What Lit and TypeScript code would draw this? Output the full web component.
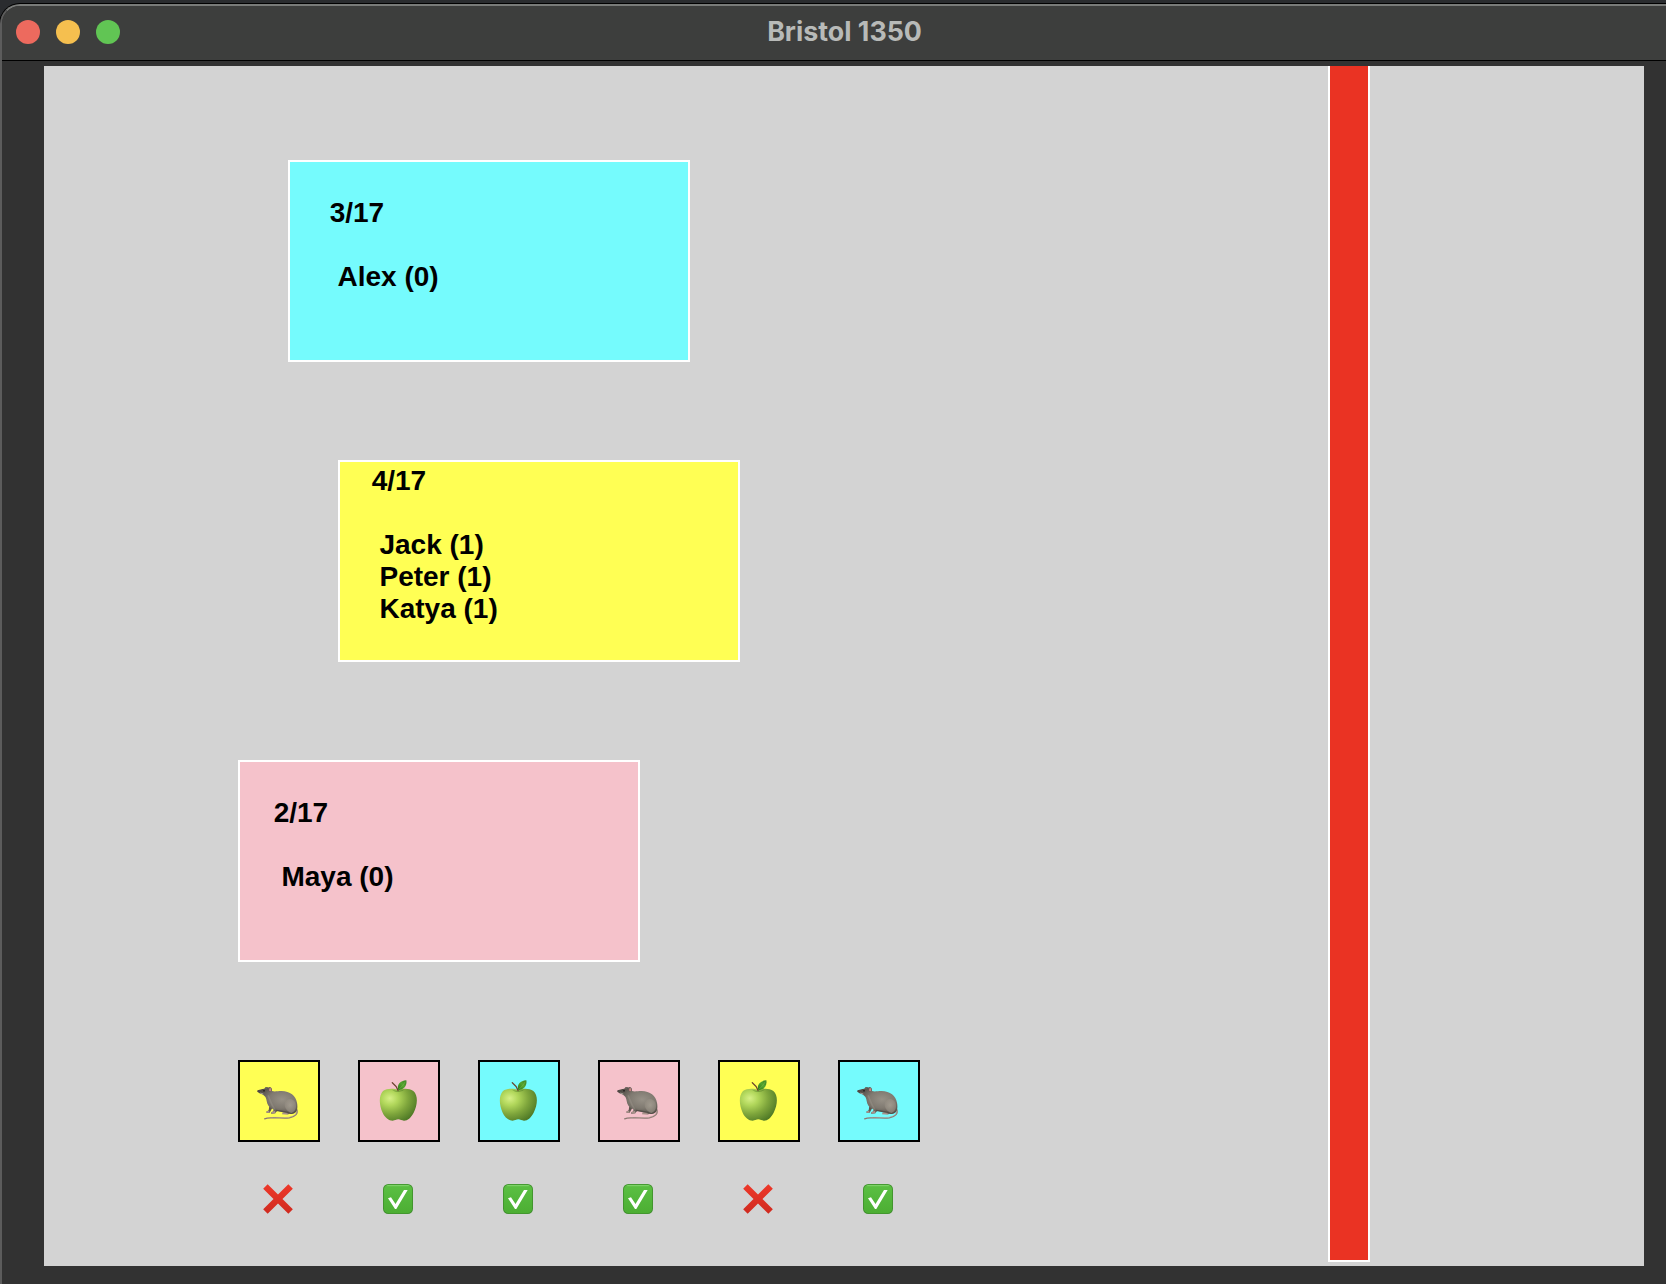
import { LitElement, html, svg, css } from "lit";
import { customElement } from "lit/decorators.js";
import { classMap } from "lit/directives/class-map.js";

type Tone = "cyan" | "yellow" | "pink";

interface Cart {
  tone: Tone;
  score: string;
  players: string[];
}

interface Die {
  tone: Tone;
  face: "rat" | "apple";
  kept: boolean;
}

const CARTS: Cart[] = [
  { tone: "cyan", score: "3/17", players: ["Alex (0)"] },
  { tone: "yellow", score: "4/17", players: ["Jack (1)", "Peter (1)", "Katya (1)"] },
  { tone: "pink", score: "2/17", players: ["Maya (0)"] },
];

const DICE: Die[] = [
  { tone: "yellow", face: "rat", kept: false },
  { tone: "pink", face: "apple", kept: true },
  { tone: "cyan", face: "apple", kept: true },
  { tone: "pink", face: "rat", kept: true },
  { tone: "yellow", face: "apple", kept: false },
  { tone: "cyan", face: "rat", kept: true },
];

const rat = svg`
  <defs>
    <radialGradient id="fur" cx="0.62" cy="0.45" r="0.6">
      <stop offset="0" stop-color="#979187"/>
      <stop offset="0.55" stop-color="#7f7970"/>
      <stop offset="1" stop-color="#514c46"/>
    </radialGradient>
    <radialGradient id="thigh" cx="0.5" cy="0.45" r="0.6">
      <stop offset="0" stop-color="#aaa397"/>
      <stop offset="1" stop-color="#8c857b"/>
    </radialGradient>
  </defs>
  <path d="M200 178 C205 190 197 200 178 203.500 C158 206 142 202 122 203.500 C113 204 108 205 104 206.500" fill="none" stroke="#8d7a74" stroke-width="4" stroke-linecap="round"/>
  <path d="M200 182 C202 191 195 198 178 201.500 C158 204 142 201 124 202.500" fill="none" stroke="#b8a19a" stroke-width="1.400"/>
  <path d="M118 168 L116 181 L109 185 L110 188 L119 188 L128 172Z" fill="#5d554e"/>
  <path d="M82 122 C88 118 95 117 103 116 C106 112 112 111 115 113 C120 110 127 114 126 123 C134 126 142 123 155 123 C180 123 198 138 201 158 C204 173 202 187 190 191 C178 194 170 190 158 187 L143 183 C139 185 137 186 136 190 L124 191 L123 188 L130 184 L130 178 C118 173 111 164 110 153 C109 144 106 138 99 134 C92 132 87 129 83 126Z" fill="url(#fur)"/>
  <path d="M165 156 C171 142 192 144 197 160 C200 174 196 185 184 189 C171 185 160 170 165 156Z" fill="url(#thigh)" opacity="0.75"/>
  <path d="M114 136 C121 149 123 164 134 178" fill="none" stroke="#aaa398" stroke-width="5" opacity="0.3"/>
  <ellipse cx="108" cy="115" rx="3.500" ry="3" fill="#69605b"/>
  <ellipse cx="119.500" cy="118.500" rx="5.500" ry="6.500" fill="#665b57"/>
  <ellipse cx="120.500" cy="119" rx="3.300" ry="5" fill="#c58583"/>
  <circle cx="102" cy="122.500" r="2.500" fill="#171414"/>
  <path d="M82 122 L88 119.500 L87 125 L83 126Z" fill="#4f4443"/>
  <path d="M91 129 L100 132" stroke="#cbc4bb" stroke-width="2"/>
  <path d="M110 184 L118 182 L118 188 L109 188Z M125 186 L135 182 L136 190 L124 191Z M157 189 Q168 184 176 191 L175 194 L156 193Z" fill="#a8918a"/>
  <path d="M138 181 C154 184 166 184 178 190" fill="none" stroke="#48423e" stroke-width="4" opacity="0.6"/>
`;

const apple = svg`
  <defs>
    <radialGradient id="skin" cx="0.27" cy="0.3" r="0.8">
      <stop offset="0" stop-color="#d6f087"/>
      <stop offset="0.28" stop-color="#b0d65a"/>
      <stop offset="0.62" stop-color="#7fa63c"/>
      <stop offset="1" stop-color="#4f7926"/>
    </radialGradient>
    <linearGradient id="leaf" x1="0" y1="1" x2="1" y2="0">
      <stop offset="0" stop-color="#2d761a"/>
      <stop offset="0.55" stop-color="#55a42e"/>
      <stop offset="1" stop-color="#397f24"/>
    </linearGradient>
  </defs>
  <path d="M145 120 C158 115 178 114 190 123 C205 136 203 165 191 188 C183 203 173 212 162 212 C155 212 151 208 145 208 C139 208 134 212 128 212 C117 212 104 202 98 188 C87 164 86 137 99 123 C111 114 133 115 145 120Z" fill="url(#skin)"/>
  <path d="M126 119 Q145 126 165 118 Q157 126 145 126 Q134 126 126 119Z" fill="#5b872c" opacity="0.65"/>
  <path d="M144 121 C140 110 135 104 127 98" fill="none" stroke="#69412d" stroke-width="4" stroke-linecap="round"/>
  <path d="M145 121 C139 104 151 92 169 91 C172 108 161 119 145 121Z" fill="url(#leaf)"/>
  <path d="M147 118 Q158 109 166 95" fill="none" stroke="#80bd51" stroke-width="1.500"/>
`;

const cross = svg`
  <defs>
    <linearGradient id="ink" x1="0" y1="0" x2="0" y2="1">
      <stop offset="0" stop-color="#ee3829"/>
      <stop offset="1" stop-color="#cf2a1f"/>
    </linearGradient>
  </defs>
  <path d="M14 0.500 L45 31.500 L76 0.500 L89.500 14 L58.500 45 L89.500 76 L76 89.500 L45 58.500 L14 89.500 L0.500 76 L31.500 45 L0.500 14Z" fill="url(#ink)"/>
`;

const check = svg`
  <defs>
    <linearGradient id="box" x1="0" y1="0" x2="0" y2="1">
      <stop offset="0" stop-color="#5bc043"/>
      <stop offset="1" stop-color="#4cae33"/>
    </linearGradient>
  </defs>
  <rect x="0" y="0" width="90" height="90" rx="16" fill="#3f8f2c"/>
  <rect x="2.500" y="2.500" width="85" height="85" rx="14" fill="url(#box)"/>
  <path d="M14 5 H76" stroke="#8bd977" stroke-width="2.500" stroke-linecap="round"/>
  <path d="M15 42.500 L24 40 L37.500 60 L63 18 L74 18 L40 75 L36 75Z" fill="#fff"/>
`;

@customElement("title-bar")
export class TitleBar extends LitElement {
  static styles = css`
    :host {
      display: block;
    }
    .bar {
      box-sizing: border-box;
      height: 55px;
      display: grid;
      grid-template-columns: 1fr auto 1fr;
      align-items: center;
      padding-left: 14px;
      padding-bottom: 2px;
      background: #3d3e3d;
      border-bottom: 1px solid #000;
    }
    .lights {
      display: flex;
      gap: 16px;
    }
    .light {
      width: 24px;
      height: 24px;
      border-radius: 50%;
    }
    .close { background: #ed6a5e; }
    .minimize { background: #f5bf4f; }
    .zoom { background: #61c554; }
    .title {
      font: 700 26.800px/32px Inter, sans-serif;
      color: #b8bab8;
      white-space: nowrap;
      padding: 0 0 3px 7px;
    }
  `;

  render() {
    return html`
      <div class="bar">
        <div class="lights">
          <div class="light close"></div>
          <div class="light minimize"></div>
          <div class="light zoom"></div>
        </div>
        <div class="title">Bristol 1350</div>
      </div>
    `;
  }
}

@customElement("app-root")
export class AppRoot extends LitElement {
  static styles = css`
    :host {
      display: block;
      height: 1284px;
      overflow: hidden;
      background: #2a2c2f;
    }
    .window {
      box-sizing: border-box;
      height: 1280px;
      border-top: 2px solid #797b79;
      border-left: 2px solid #5c5c5c;
      border-top-left-radius: 20px;
      box-shadow: 0 0 0 1px #000;
      background: #323232;
      overflow: hidden;
    }
    .desktop {
      padding-top: 4px;
    }
    .board {
      box-sizing: border-box;
      width: 1600px;
      height: 1200px;
      margin: 5px 0 0 42px;
      padding-left: 194px;
      background: #d3d3d3;
      display: flex;
      justify-content: space-between;
    }
    .play {
      padding-top: 94px;
    }
    .carts {
      display: flex;
      flex-direction: column;
      align-items: flex-start;
      gap: 98px;
    }
    .cart {
      box-sizing: border-box;
      width: 402px;
      height: 202px;
      border: 2px solid #fff;
      font: 700 28px/32px "Liberation Sans", Arial, sans-serif;
      color: #000;
    }
    .cyan { background: #75fbfd; }
    .yellow { background: #ffff54; }
    .pink { background: #f5c2cb; }
    .cart.cyan { margin-left: 50px; padding: 35px 0 0 39.700px; }
    .cart.yellow { margin-left: 100px; padding: 3px 0 0 31.700px; }
    .cart.pink { padding: 35px 0 0 33.700px; }
    .players {
      padding: 32px 0 0 7.780px;
    }
    .dice {
      display: flex;
      gap: 38px;
      margin-top: 98px;
    }
    .die {
      display: flex;
      flex-direction: column;
      align-items: center;
      gap: 42px;
    }
    .face {
      width: 78px;
      height: 78px;
      border: 2px solid #000;
    }
    .icon {
      display: block;
      width: 100%;
      height: 100%;
    }
    .mark {
      width: 30px;
      height: 30px;
      margin-right: 2px;
    }
    .finish {
      box-sizing: border-box;
      width: 42px;
      height: 1196px;
      margin-right: 274px;
      background: #ea3323;
      border: 2px solid #fff;
      border-top: none;
    }
  `;

  private renderCart(cart: Cart) {
    return html`
      <div class=${classMap({ cart: true, [cart.tone]: true })}>
        <div>${cart.score}</div>
        <div class="players">${cart.players.map((p) => html`<div>${p}</div>`)}</div>
      </div>
    `;
  }

  private renderDie(die: Die) {
    return html`
      <div class="die">
        <div class=${classMap({ face: true, [die.tone]: true })}>
          <svg class="icon" viewBox="30 36 234 234">${die.face === "rat" ? rat : apple}</svg>
        </div>
        <div class="mark">
          <svg class="icon" viewBox="0 0 90 90">${die.kept ? check : cross}</svg>
        </div>
      </div>
    `;
  }

  render() {
    return html`
      <div class="desktop">
        <div class="window">
          <title-bar></title-bar>
          <div class="board">
            <div class="play">
              <div class="carts">${CARTS.map((c) => this.renderCart(c))}</div>
              <div class="dice">${DICE.map((d) => this.renderDie(d))}</div>
            </div>
            <div class="finish"></div>
          </div>
        </div>
      </div>
    `;
  }
}
